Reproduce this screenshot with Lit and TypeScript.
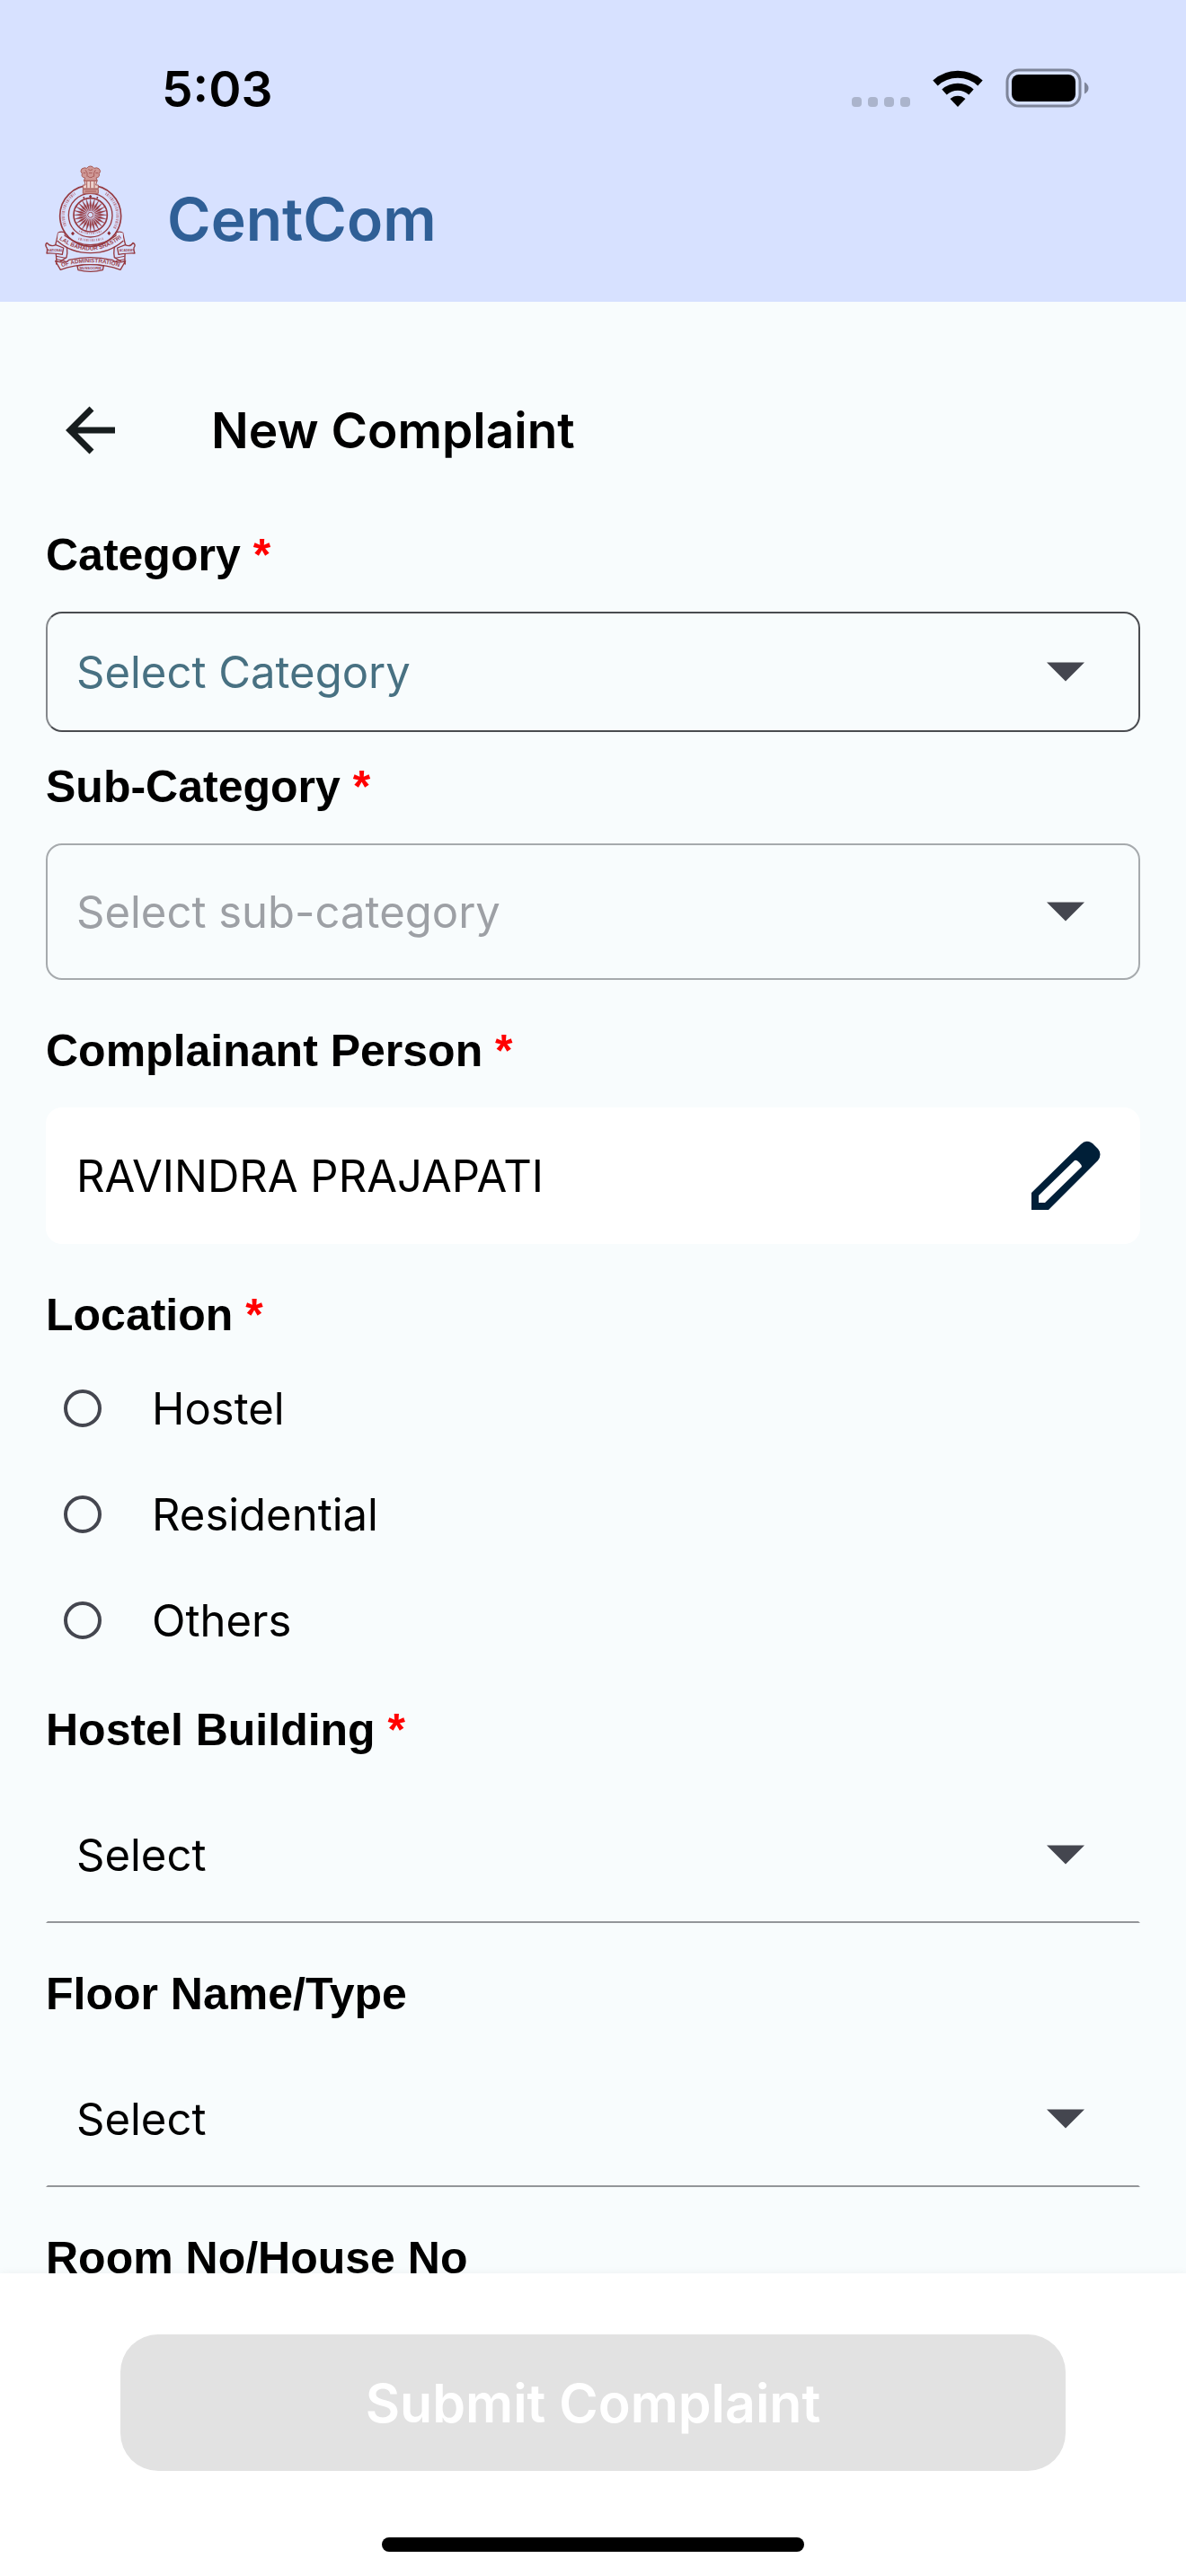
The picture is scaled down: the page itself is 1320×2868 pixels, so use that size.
import { LitElement, css, html, svg } from 'lit';
import { customElement, state } from 'lit/decorators.js';

type Variant = 'outlined' | 'underlined';

interface SelectField {
  id: string;
  label: string;
  placeholder: string;
  required: boolean;
  variant: Variant;
  disabled?: boolean;
  compact?: boolean;
}

const TOP_FIELDS: SelectField[] = [
  { id: 'category', label: 'Category', placeholder: 'Select Category', required: true, variant: 'outlined', compact: true },
  { id: 'sub-category', label: 'Sub-Category', placeholder: 'Select sub-category', required: true, variant: 'outlined', disabled: true },
];

const PLACE_FIELDS: SelectField[] = [
  { id: 'building', label: 'Hostel Building', placeholder: 'Select', required: true, variant: 'underlined' },
  { id: 'floor', label: 'Floor Name/Type', placeholder: 'Select', required: false, variant: 'underlined' },
  { id: 'room', label: 'Room No/House No', placeholder: 'Select', required: false, variant: 'underlined' },
];

const LOCATIONS = ['Hostel', 'Residential', 'Others'];

/** Academy crest: lions, spoked wheel and ribbons. */
@customElement('academy-crest')
export class AcademyCrest extends LitElement {
  static styles = css`
    :host {
      display: block;
      width: 102px;
      height: 120px;
    }
    svg {
      display: block;
      width: 100%;
      height: 100%;
      overflow: visible;
    }
    .ribbon {
      font: 700 19px 'Liberation Sans', sans-serif;
      fill: #99404a;
    }
    .small {
      font-size: 12px;
    }
    .tiny {
      font-size: 10px;
    }
  `;

  render() {
    const spokes = Array.from({ length: 24 }, (_, i) => i * 15);
    return html`
      <svg viewBox="60 42 306 360" role="img" aria-label="Academy crest">
        <defs>
          <path id="banner" d="M106 288 Q211 366 318 284" />
          <path id="scroll" d="M106 385 Q211 348 318 385" />
        </defs>
        <g fill="none" stroke="#963a42" stroke-width="5">
          <circle cx="212" cy="211" r="102" />
          <circle cx="212" cy="209" r="73" stroke-width="4" />
          <circle cx="212" cy="208" r="56" />
          <circle cx="212" cy="208" r="9" stroke-width="3" />
          ${spokes.map((a) => svg`<path d="M212 195 L209 175 L212 153 L215 175 Z" fill="#963a42" stroke-width="1" transform="rotate(${a} 212 208)" />`)}
        </g>
        <g fill="none" stroke="#bd8696" stroke-width="10" stroke-dasharray="3 3 5 3 2 4">
          <path d="M128 245 A90 90 0 0 1 160 136" />
          <path d="M263 136 A90 90 0 0 1 291 255" />
          <path d="M174 262 Q212 276 250 262" stroke-width="6" />
          <path d="M172 287 Q212 298 254 287" stroke-width="8" />
        </g>
        <g fill="#8a2c36">
          <path d="M153 263 l6 7 -6 7 -6 -7z M274 262 l6 7 -6 7 -6 -7z M212 140 l5 6 -5 6 -5 -6z" />
          <circle cx="190" cy="150" r="3" />
          <circle cx="235" cy="150" r="3" />
        </g>
        <g stroke="#a75a57" stroke-width="3" fill="#cf9896">
          <path d="M190 94 L194 84 Q180 82 184 70 Q176 62 183 54 Q192 48 200 52 Q204 45 212 45 Q220 45 224 52 Q234 48 241 54 Q249 62 241 70 Q244 82 231 84 L235 94 Z" />
          <path d="M195 58 Q204 66 201 80 M229 58 Q221 66 224 80 M205 56 Q212 62 219 56 M207 68 H218 M203 78 Q212 88 222 78 M188 68 H196 M229 68 H238" fill="none" />
          <path d="M192 94 H234 L230 108 H238 V120 H187 V108 H195 Z" fill="#ecd3cf" />
          <path d="M187 122 H238 V136 H187 Z M200 95 V118 M212 95 V118 M225 95 V118 M194 129 H231" />
        </g>
        <g fill="#d7e1ff" stroke="#94383f" stroke-width="4" stroke-linejoin="round">
          <path d="M104 268 Q112 262 126 266 Q128 276 122 284 Q140 322 132 350 L98 372 Q100 340 92 318 Q98 300 104 268 Z" />
          <path d="M320 268 Q310 262 297 266 Q296 276 302 284 Q286 322 292 350 L328 372 Q324 340 332 318 Q326 300 320 268 Z" />
          <path d="M96 308 Q78 316 67 301 Q60 306 64 314 Q70 320 66 336 Q82 334 118 340 L122 318 Z" />
          <path d="M328 308 Q346 316 354 301 Q363 306 359 314 Q354 320 360 336 Q344 334 306 340 L302 318 Z" />
          <path d="M104 268 Q126 264 125 276 Q168 322 212 322 Q258 322 298 276 Q300 262 320 268 L322 294 Q276 335 212 335 Q146 335 101 294 Z" fill="#dfe4fb" stroke="none" />
          <path d="M125 276 Q168 308 212 308 Q258 308 298 276 M101 294 Q146 335 212 335 Q276 335 322 294" fill="none" />
          <path d="M98 346 L130 352 M98 356 L128 362 M326 346 L294 352 M328 356 L296 362" stroke-width="3" />
          <path d="M95 362 Q130 372 140 358 Q212 342 284 358 Q300 372 329 362 L312 391 Q268 374 212 374 Q156 374 112 391 Z" fill="#dfe4fb" />
          <path d="M168 378 Q212 370 256 378 L253 392 Q212 402 171 392 Z" />
        </g>
        <text class="ribbon"><textPath href="#banner" startOffset="50%" text-anchor="middle">LAL BAHADUR SHASTRI</textPath></text>
        <text class="ribbon"><textPath href="#scroll" startOffset="50%" text-anchor="middle">OF ADMINISTRATION</textPath></text>
        <text class="ribbon small" x="212" y="391" text-anchor="middle">MUSSOORIE</text>
        <text class="ribbon tiny" x="69" y="330">NATIONAL</text>
        <text class="ribbon tiny" x="308" y="330">ACADEMY</text>
      </svg>
    `;
  }
}

@customElement('app-root')
export class AppRoot extends LitElement {
  @state() private _location = '';

  static styles = css`
    :host {
      display: flex;
      flex-direction: column;
      height: 100vh;
      overflow: hidden;
      background: #f8fcfd;
      color: #000;
      font-family: Inter, 'Liberation Sans', sans-serif;
      font-size: 49px;
    }
    * {
      box-sizing: border-box;
    }
    header {
      flex: none;
      background: #d7e1ff;
      padding-bottom: 32px;
    }
    .status {
      display: flex;
      align-items: center;
      justify-content: space-between;
      height: 168px;
      padding: 30px 108px 0 180px;
    }
    .time {
      font-size: 55px;
      font-weight: 600;
    }
    .indicators {
      display: flex;
      align-items: center;
    }
    .brand {
      display: flex;
      align-items: center;
      gap: 34px;
      height: 136px;
      padding: 16px 50px 0;
    }
    .brand-name {
      margin: 0;
      font-size: 66px;
      font-weight: 600;
      color: #2f5f96;
    }
    main {
      flex: 1;
      min-height: 0;
      overflow: hidden;
      padding: 0 51px;
    }
    .title-bar {
      display: flex;
      align-items: center;
      gap: 98px;
      height: 120px;
      margin: 83px 0 50px;
      padding-left: 10px;
    }
    .back {
      display: flex;
      padding: 0;
      border: 0;
      background: none;
    }
    h2 {
      margin: 0;
      font-size: 55px;
      font-weight: 600;
    }
    .field {
      display: grid;
      gap: 34px;
      margin: 0 0 50px;
      padding: 0;
      border: 0;
      min-width: 0;
    }
    .field.compact {
      margin-bottom: 32px;
    }
    .label {
      padding: 0;
      font: 700 50px/58px 'Liberation Sans', sans-serif;
    }
    .star {
      color: #f00;
    }
    .control {
      display: grid;
      align-items: center;
      height: 152px;
    }
    .compact .control {
      height: 134px;
    }
    .control > * {
      grid-area: 1 / 1;
    }
    .control > svg {
      justify-self: end;
      margin-right: 62px;
      pointer-events: none;
    }
    select,
    input[type='text'] {
      appearance: none;
      width: 100%;
      height: 100%;
      margin: 0;
      padding: 0 150px 0 32px;
      border: 2px solid transparent;
      border-radius: 18px;
      background: none;
      color: #000;
      font: inherit;
      opacity: 1;
    }
    .outlined select {
      border-color: #4a4c50;
      border-left-color: #85888c;
      color: #487182;
    }
    .outlined select:disabled {
      border-color: #a6aaad;
      color: #9da0a5;
    }
    .underlined select {
      border-bottom-color: #939699;
      border-radius: 0;
    }
    input[type='text'] {
      background: #fff;
      border-color: #fff;
    }
    .edit {
      display: flex;
      justify-self: end;
      margin-right: 44px;
      padding: 0;
      border: 0;
      background: none;
    }
    .location {
      display: block;
      margin-bottom: 34px;
    }
    .location .label {
      margin-bottom: 16px;
    }
    .option {
      display: flex;
      align-items: center;
      gap: 56px;
      height: 118px;
      padding-left: 20px;
    }
    input[type='radio'] {
      appearance: none;
      flex: none;
      width: 42px;
      height: 42px;
      margin: 0;
      border: 4px solid #44464f;
      border-radius: 50%;
    }
    input[type='radio']:checked {
      background: radial-gradient(#44464f 45%, transparent 50%);
    }
    footer {
      position: relative;
      flex: none;
      display: flex;
      flex-direction: column;
      align-items: center;
      padding: 68px 134px 27px;
      background: #fff;
      box-shadow: 0 0 10px rgba(0, 0, 0, 0.05);
    }
    .submit {
      width: 100%;
      height: 152px;
      border: 0;
      border-radius: 42px;
      background: #e2e2e2;
      color: #fff;
      font: 600 59px Inter, sans-serif;
    }
    .home-bar {
      width: 470px;
      height: 16px;
      margin-top: 74px;
      border-radius: 8px;
      background: #000;
    }
  `;

  private _label(text: string, required: boolean) {
    return html`${text}${required ? html` <span class="star">*</span>` : ''}`;
  }

  private _select(f: SelectField) {
    return html`
      <div class="field ${f.variant} ${f.compact ? 'compact' : ''}">
        <label class="label" for=${f.id}>${this._label(f.label, f.required)}</label>
        <div class="control">
          <select id=${f.id} ?disabled=${f.disabled ?? false}>
            <option>${f.placeholder}</option>
          </select>
          <svg width="42" height="22" viewBox="0 0 42 22" aria-hidden="true">
            <path d="M0 0.5H42L21 21.5Z" fill="#44464f" />
          </svg>
        </div>
      </div>
    `;
  }

  private _option(name: string) {
    return html`
      <label class="option">
        <input
          type="radio"
          name="location"
          .checked=${this._location === name}
          @change=${() => (this._location = name)}
        />
        ${name}
      </label>
    `;
  }

  render() {
    return html`
      <header>
        <div class="status">
          <span class="time">5:03</span>
          <div class="indicators">
            <svg width="264" height="46" viewBox="0 0 264 46" aria-hidden="true">
              <g fill="#abb4cc">
                <rect x="0" y="32" width="11" height="11" rx="4" />
                <rect x="18" y="32" width="11" height="11" rx="4" />
                <rect x="36" y="32" width="11" height="11" rx="4" />
                <rect x="54" y="32" width="11" height="11" rx="4" />
              </g>
              <path d="M93 16.5 A37 37 0 0 1 143 16.5" fill="none" stroke="#000" stroke-width="8" />
              <path d="M103 26.5 A22.5 22.5 0 0 1 133 26.5" fill="none" stroke="#000" stroke-width="8" />
              <path d="M118 43 L109.5 34 A12.5 12.5 0 0 1 126.5 34 Z" />
              <rect x="173" y="2" width="81" height="40" rx="13" fill="none" stroke="#7e859a" stroke-width="3" />
              <rect x="178" y="7" width="71" height="30" rx="8" />
              <path d="M259 15.5 Q263.5 18 263.5 22 Q263.5 26 259 28.5 Z" fill="#7e859a" />
            </svg>
          </div>
        </div>
        <div class="brand">
          <academy-crest></academy-crest>
          <h1 class="brand-name">CentCom</h1>
        </div>
      </header>

      <main>
        <div class="title-bar">
          <button class="back" type="button" aria-label="Back">
            <svg width="76" height="76" viewBox="0 0 76 76" fill="none" stroke="#171d1e" stroke-width="7">
              <path d="M67 38H17M41 14L17 38L41 62" />
            </svg>
          </button>
          <h2>New Complaint</h2>
        </div>

        ${TOP_FIELDS.map((f) => this._select(f))}

        <div class="field">
          <label class="label" for="person">${this._label('Complainant Person', true)}</label>
          <div class="control">
            <input id="person" type="text" readonly value="RAVINDRA PRAJAPATI" />
            <button class="edit" type="button" aria-label="Edit complainant">
              <svg width="78" height="78" viewBox="0 0 78 78" aria-hidden="true">
                <path
                  fill="#001f38"
                  fill-rule="evenodd"
                  d="M1 77V58L56 4Q62 -2 69 3L75 9Q80 15 75 22L20 77ZM9 69H16L57 29Q57 27 54 24Q51 21 49 22L9 61Z"
                />
              </svg>
            </button>
          </div>
        </div>

        <fieldset class="field location">
          <legend class="label">${this._label('Location', true)}</legend>
          ${LOCATIONS.map((name) => this._option(name))}
        </fieldset>

        ${PLACE_FIELDS.map((f) => this._select(f))}
      </main>

      <footer>
        <button class="submit" type="submit" disabled>Submit Complaint</button>
        <div class="home-bar"></div>
      </footer>
    `;
  }
}

declare global {
  interface HTMLElementTagNameMap {
    'academy-crest': AcademyCrest;
    'app-root': AppRoot;
  }
}
